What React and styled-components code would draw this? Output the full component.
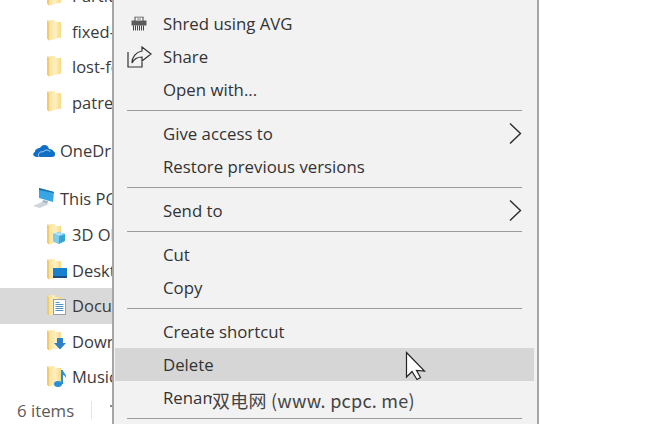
import React from "react";
import styled, { createGlobalStyle } from "styled-components";

const GlobalStyle = createGlobalStyle`
  html, body {
    margin: 0;
    padding: 0;
    background: #fff;
  }
  body {
    font-family: "Open Sans", "Noto Sans", "Liberation Sans", sans-serif;
  }
  svg {
    flex: none;
  }
`;

const Page = styled.div`
  display: flex;
  width: 670px;
  height: 424px;
  overflow: hidden;
  position: relative;
  color: #3a3a3a;
`;

const Sidebar = styled.nav`
  display: flex;
  flex-direction: column;
  flex: none;
  width: 112px;
  height: 424px;
  overflow: hidden;
`;

const NavList = styled.div`
  display: flex;
  flex-direction: column;
  flex: 1;
  margin-top: -22px;
`;

const NavRow = styled.div`
  display: flex;
  align-items: center;
  flex: none;
  height: 35.5px;
  padding-left: ${(p) => (p.$root ? 32 : 45)}px;
  margin-top: ${(p) => p.$gap || 0}px;
  background: ${(p) => (p.$selected ? "#d9d9d9" : "transparent")};
  white-space: nowrap;
  font-size: 16.5px;
`;

const NavLabel = styled.span`
  margin-left: ${(p) => (p.$root ? 4 : 5)}px;
`;

const StatusBar = styled.div`
  display: flex;
  align-items: center;
  flex: none;
  height: 28px;
  padding-left: 17px;
  font-size: 16.8px;
  color: #5a5a5a;
  white-space: nowrap;
`;

const StatusDivider = styled.span`
  flex: none;
  width: 1px;
  height: 18px;
  margin: 0 18px 0 17px;
  background: #e4e4e4;
`;

const StatusTick = styled.span`
  flex: none;
  width: 2px;
  height: 2px;
  margin-bottom: 8px;
  background: #8a8a8a;
`;

const Menu = styled.div`
  display: flex;
  flex-direction: column;
  flex: none;
  box-sizing: border-box;
  width: 427px;
  height: 424px;
  padding: 7px 3px 0 1px;
  background: #f2f2f2;
  border-left: 2px solid #a6a6a6;
  border-right: 2px solid #a6a6a6;
  overflow: hidden;
`;

const MenuItem = styled.div`
  position: relative;
  display: flex;
  align-items: center;
  flex: none;
  height: 33px;
  padding-left: 48px;
  font-size: 16.8px;
  color: #333;
  background: ${(p) => (p.$hover ? "#d6d6d6" : "transparent")};
`;

const ItemIcon = styled.span`
  position: absolute;
  left: ${(p) => p.$left}px;
  top: 50%;
  transform: translateY(-50%);
  display: flex;
`;

const Chevron = styled.svg`
  position: absolute;
  right: 12px;
  top: 5px;
  width: 14px;
  height: 23px;
`;

const Separator = styled.div`
  flex: none;
  box-sizing: border-box;
  height: 11px;
  padding-top: 4px;
  margin: 0 12px;

  &::before {
    content: "";
    display: block;
    height: 1px;
    background: #9c9c9c;
  }
`;

const Watermark = styled.div`
  position: absolute;
  left: 212px;
  top: 386px;
  height: 28px;
  padding-right: 4px;
  display: flex;
  align-items: center;
  background: #f2f2f2;
  font-family: "Noto Sans CJK SC", "Open Sans", sans-serif;
  font-size: 18px;
  letter-spacing: 0.25px;
  color: #444;
  white-space: nowrap;
`;

const CursorMark = styled.svg`
  position: absolute;
  left: 405px;
  top: 351px;
  width: 22px;
  height: 30px;
`;

const Folder = ({ children }) => (
  <svg width="22" height="24" viewBox="0 0 22 24">
    <defs>
      <linearGradient id="folderFill" x1="0" y1="0" x2="1" y2="0">
        <stop offset="0" stopColor="#f7dc8e" />
        <stop offset="0.6" stopColor="#fff0c2" />
        <stop offset="1" stopColor="#f9d97f" />
      </linearGradient>
    </defs>
    <path d="M2 1.5 L10 1 L10 3 L16 3 L16 18.5 L4 21.5 L2 19.5 Z" fill="url(#folderFill)" />
    <path d="M2 1.5 L4 3.5 L4 21.5 L2 19.5 Z" fill="#f1ca6c" />
    {children}
  </svg>
);

const CubeBadge = () => (
  <g>
    <path d="M8 11 L14 9 L20 11 L20 18 L14 21 L8 18 Z" fill="#35a5d8" />
    <path d="M8 11 L14 9 L20 11 L14 13 Z" fill="#a9e1f5" />
    <path d="M8 11 L14 13 L14 21 L8 18 Z" fill="#7fcdea" />
  </g>
);

const DesktopBadge = () => (
  <g>
    <rect x="8" y="10" width="14" height="10" fill="#1b7fd0" />
    <rect x="8" y="18" width="14" height="2" fill="#1a4f80" />
  </g>
);

const DocBadge = () => (
  <g>
    <rect x="8.5" y="5.5" width="12" height="15" fill="#fff" stroke="#9aa0a5" />
    <path d="M10.5 8.5h4M10.5 10.5h8M10.5 12.5h8M10.5 14.5h8M10.5 16.5h8" stroke="#4f93c9" strokeWidth="1" />
  </g>
);

const DownBadge = () => (
  <path d="M12 9 H18 V14 H21 L15 20.5 L9 14 H12 Z" fill="#2f80c9" />
);

const MusicBadge = () => (
  <g>
    <ellipse cx="13" cy="19" rx="4" ry="3" fill="#2a8fd6" />
    <path d="M16 19 V5 L18 5 C18 8 22 9 21 13 C20 11 19 10 18 10 V19 Z" fill="#2a8fd6" />
  </g>
);

const OneDriveIcon = () => (
  <svg width="24" height="16" viewBox="0 0 24 16">
    <path
      d="M5 14 C1 14 0 10 3 9 C3 6 6 5 8 5 C10 1 16 1 17 6 C20 6 21 7 21 8 C24 9 24 14 20 14 Z"
      fill="#0f6fc6"
    />
    <path d="M7 14 C5 11 8 8 11 9 C13 6 18 7 18 9" fill="none" stroke="#cfe3f5" strokeWidth="0.8" />
  </svg>
);

const ThisPcIcon = () => (
  <svg width="24" height="22" viewBox="0 0 24 22">
    <path d="M7 1 L22 5 L21 15 L7 11 Z" fill="#38a6e4" />
    <path d="M7 1 L22 5 L22 6 L7 3 Z" fill="#1a6fab" />
    <path d="M11 13 L16 14 L15 17 L10 16 Z" fill="#9fb6c6" />
    <path d="M1 19 L10 15 L17 17 L8 21 Z" fill="#cfd6db" />
  </svg>
);

const ShredIcon = () => (
  <svg width="16" height="15" viewBox="0 0 16 15">
    <rect x="4" y="0.5" width="8" height="5" fill="#fff" stroke="#444" />
    <rect x="0.5" y="4" width="15" height="5" fill="#5c5c5c" />
    <path d="M6 2.5h4" stroke="#777" />
    <path
      d="M2.5 9v5M4.5 9v5M6.5 9v5M8.5 9v5M10.5 9v5M12.5 9v5"
      stroke="#444"
      strokeWidth="1"
    />
  </svg>
);

const ShareIcon = () => (
  <svg width="25" height="22" viewBox="0 0 25 22" fill="none" stroke="#333" strokeWidth="1.2">
    <path d="M1 6 V21 H15 V16" />
    <path d="M15 1 L24 8 L15 15 V11 C10 11 7 13 5 17 C5 11 9 6 15 5 Z" fill="#f2f2f2" />
  </svg>
);

const ChevronIcon = () => (
  <Chevron viewBox="0 0 14 23" fill="none" stroke="#2b2b2b" strokeWidth="1.4">
    <path d="M2 1.5 L12.5 11.5 L2 21.5" />
  </Chevron>
);

const quickFolders = ["Partition", "fixed-files", "lost-found", "patreon"];

const libraries = [
  { label: "3D Objects", badge: <CubeBadge />, gap: 1 },
  { label: "Desktop", badge: <DesktopBadge /> },
  { label: "Documents", badge: <DocBadge />, selected: true },
  { label: "Downloads", badge: <DownBadge /> },
  { label: "Music", badge: <MusicBadge /> },
];

const App = () => {
  return (
    <Page>
      <GlobalStyle />
      <Sidebar>
        <NavList>
          {quickFolders.map((name) => (
            <NavRow key={name}>
              <Folder />
              <NavLabel>{name}</NavLabel>
            </NavRow>
          ))}
          <NavRow $root $gap={13}>
            <OneDriveIcon />
            <NavLabel $root>OneDrive</NavLabel>
          </NavRow>
          <NavRow $root $gap={12}>
            <ThisPcIcon />
            <NavLabel $root>This PC</NavLabel>
          </NavRow>
          {libraries.map((item) => (
            <NavRow key={item.label} $selected={item.selected} $gap={item.gap}>
              <Folder>{item.badge}</Folder>
              <NavLabel>{item.label}</NavLabel>
            </NavRow>
          ))}
        </NavList>
        <StatusBar>
          6 items
          <StatusDivider />
          <StatusTick />
        </StatusBar>
      </Sidebar>
      <Menu>
        <MenuItem>
          <ItemIcon $left={16}>
            <ShredIcon />
          </ItemIcon>
          Shred using AVG
        </MenuItem>
        <MenuItem>
          <ItemIcon $left={12}>
            <ShareIcon />
          </ItemIcon>
          Share
        </MenuItem>
        <MenuItem>Open with...</MenuItem>
        <Separator />
        <MenuItem>
          Give access to
          <ChevronIcon />
        </MenuItem>
        <MenuItem>Restore previous versions</MenuItem>
        <Separator />
        <MenuItem>
          Send to
          <ChevronIcon />
        </MenuItem>
        <Separator />
        <MenuItem>Cut</MenuItem>
        <MenuItem>Copy</MenuItem>
        <Separator />
        <MenuItem>Create shortcut</MenuItem>
        <MenuItem $hover>Delete</MenuItem>
        <MenuItem>Rename</MenuItem>
        <Separator />
      </Menu>
      <Watermark>双电网 (www. pcpc. me)</Watermark>
      <CursorMark viewBox="0 0 22 30">
        <path
          d="M1.5 1.5 L1.5 26 L7 20.5 L12 28.5 L15.5 26.5 L11.5 19.5 L19.5 20 Z"
          fill="#fff"
          stroke="#222"
          strokeWidth="1.2"
        />
      </CursorMark>
    </Page>
  );
};

export default App;
